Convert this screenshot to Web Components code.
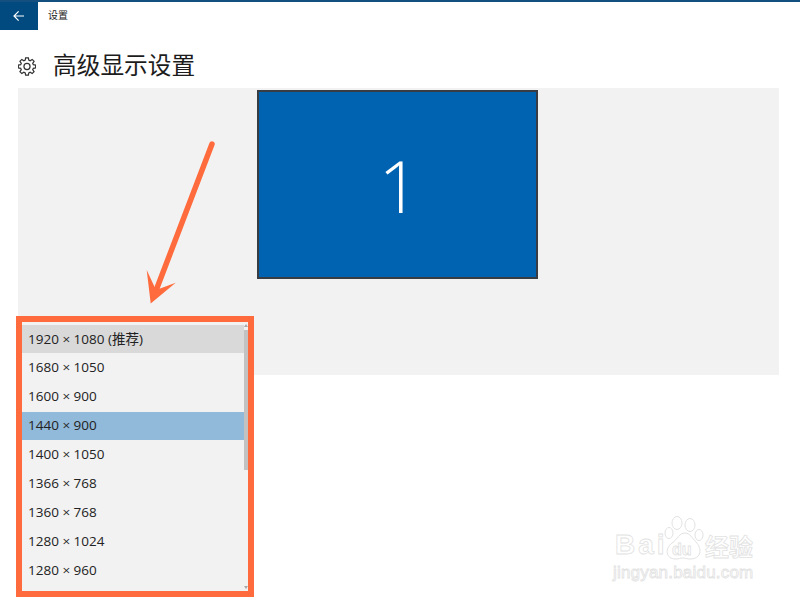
<!DOCTYPE html>
<html>
<head>
<meta charset="utf-8">
<style>
  html, body { margin: 0; height: 100%; background: #ffffff; overflow: hidden; }
  body { font-family: "Noto Sans", "Noto Sans CJK SC", sans-serif; color: #1a1a1a; }
  settings-page { width: 800px; height: 600px; }
</style>
</head>
<body>
<settings-page>
  <title-bar>设置</title-bar>
  <page-heading>高级显示设置</page-heading>
  <display-panel>1</display-panel>
  <callout-arrow></callout-arrow>
  <mode-list>
    <mode-item state="hover">1920 × 1080 (推荐)</mode-item>
    <mode-item>1680 × 1050</mode-item>
    <mode-item>1600 × 900</mode-item>
    <mode-item state="selected">1440 × 900</mode-item>
    <mode-item>1400 × 1050</mode-item>
    <mode-item>1366 × 768</mode-item>
    <mode-item>1360 × 768</mode-item>
    <mode-item>1280 × 1024</mode-item>
    <mode-item>1280 × 960</mode-item>
  </mode-list>
  <baidu-mark></baidu-mark>
</settings-page>

<script>
class SettingsPage extends HTMLElement {
  constructor() {
    super()
    this.attachShadow({ mode: 'open' }).innerHTML = `
      <style>
        :host { display: flex; flex-direction: column; position: relative; overflow: hidden; }
      </style>
      <slot></slot>`
  }
}

class TitleBar extends HTMLElement {
  constructor() {
    super()
    this.attachShadow({ mode: 'open' }).innerHTML = `
      <style>
        :host { display: flex; align-items: flex-start; height: 28px; border-top: 2px solid #14507f; font-size: 10px; color: #222; }
        .back { width: 38px; height: 28px; background: #004a80; display: flex; align-items: center; justify-content: center; margin-right: 10px; }
        .label { font-family: "Noto Sans CJK SC", sans-serif; line-height: 28px; margin-top: -1px; }
      </style>
      <div class="back">
        <svg width="12" height="12" viewBox="0 0 12 12" fill="none" stroke="#ffffff" stroke-width="1.2">
          <path d="M11 6H1.2M5.6 1.4L1 6l4.6 4.6"/>
        </svg>
      </div>
      <span class="label"><slot></slot></span>`
  }
}

class PageHeading extends HTMLElement {
  constructor() {
    super()
    this.attachShadow({ mode: 'open' }).innerHTML = `
      <style>
        :host { display: flex; align-items: center; height: 58px; padding: 10px 0 0 18px; box-sizing: border-box; font-family: "Noto Sans CJK SC", sans-serif; font-size: 23.7px; color: #1c1c1c; }
        svg { margin: 5px 17px 0 0; flex: none; }
      </style>
      <svg width="18" height="19" viewBox="0 0 17 18" fill="none" stroke="#333" stroke-width="1.15">
        <circle cx="8.5" cy="9" r="2.9"/>
        <path d="M7.2.8h2.6l.4 2.2 1.3.6 1.9-1.3 1.8 1.8-1.3 1.9.6 1.3 2.2.4v2.6l-2.2.4-.6 1.3 1.3 1.9-1.8 1.8-1.9-1.3-1.3.6-.4 2.2H7.2l-.4-2.2-1.3-.6-1.9 1.3-1.8-1.8 1.3-1.9-.6-1.3-2.2-.4V7.7l2.2-.4.6-1.3-1.3-1.9 1.8-1.8 1.9 1.3 1.3-.6z"/>
      </svg>
      <slot></slot>`
  }
}

class DisplayPanel extends HTMLElement {
  constructor() {
    super()
    this.attachShadow({ mode: 'open' }).innerHTML = `
      <style>
        :host { display: flex; justify-content: center; align-items: flex-start; margin: 0 21px 0 18px; height: 287px; padding-top: 2px; box-sizing: border-box; background: #f2f2f2; }
        .monitor { width: 281px; height: 189px; margin-right: 2px; padding-left: 3px; box-sizing: border-box; border: 2px solid #383d44; background: #0063b1; color: #fff; display: flex; align-items: center; justify-content: center; font-family: "Open Sans", sans-serif; font-weight: 300; font-size: 72px; line-height: 1; }
      </style>
      <div class="monitor"><slot></slot></div>`
  }
}

class ModeList extends HTMLElement {
  constructor() {
    super()
    this.attachShadow({ mode: 'open' }).innerHTML = `
      <style>
        :host { display: flex; position: absolute; left: 16px; top: 316px; width: 238px; height: 281px; box-sizing: border-box; border: 6px solid #ff6b3d; background: #f2f2f2; }
        .items { flex: 1; display: flex; flex-direction: column; padding-top: 3px; min-width: 0; }
        .bar { width: 4px; flex: none; position: relative; background: #f2f2f2; }
        .thumb { position: absolute; left: 0; right: 0; top: 8px; height: 140px; background: #c2c2c2; }
        .up, .down { position: absolute; left: 0; width: 0; height: 0; border-left: 2px solid transparent; border-right: 2px solid transparent; }
        .up { top: 2px; border-bottom: 3px solid #a8a8a8; }
        .down { bottom: 2px; border-top: 3px solid #a8a8a8; }
      </style>
      <div class="items"><slot></slot></div>
      <div class="bar"><span class="up"></span><div class="thumb"></div><span class="down"></span></div>`
  }
}

class ModeItem extends HTMLElement {
  constructor() {
    super()
    this.attachShadow({ mode: 'open' }).innerHTML = `
      <style>
        :host { display: flex; align-items: center; height: 29px; padding: 0 0 3px 6px; box-sizing: border-box; font-family: "Open Sans", "Noto Sans CJK SC", sans-serif; font-size: 13.5px; color: #222; border-bottom: 1px solid transparent; }
        :host([state="hover"]) { background: #d9d9d9; border-bottom-color: #f2f2f2; }
        :host([state="selected"]) { background: #91b9d9; border-bottom-color: #f2f2f2; }
      </style>
      <slot></slot>`
  }
}

class CalloutArrow extends HTMLElement {
  constructor() {
    super()
    this.attachShadow({ mode: 'open' }).innerHTML = `
      <style>
        :host { display: block; position: absolute; left: 140px; top: 135px; width: 80px; height: 175px; }
      </style>
      <svg width="80" height="175" viewBox="140 135 80 175">
        <path d="M212 144L157 288" stroke="#ff6b3d" stroke-width="5.5" stroke-linecap="round" fill="none"/>
        <path d="M146.7 270L150.7 303.5 175.7 282.7 156 290z" fill="#ff6b3d"/>
      </svg>`
  }
}

class BaiduMark extends HTMLElement {
  constructor() {
    super()
    this.attachShadow({ mode: 'open' }).innerHTML = `
      <style>
        :host { display: block; position: absolute; left: 612px; top: 512px; width: 150px; height: 72px; font-family: "Liberation Sans", sans-serif; color: #fff; -webkit-text-stroke: .8px #e2e2e2; }
        span { position: absolute; white-space: nowrap; }
        .bai { left: 3px; top: 17px; font-size: 28px; font-weight: 700; letter-spacing: 3px; }
        .du { left: 60px; top: 29px; font-size: 16px; font-weight: 700; }
        .jy { left: 93px; top: 22px; font-family: "Noto Sans CJK SC", sans-serif; font-size: 24px; line-height: 1; font-weight: 700; }
        .url { left: 1px; top: 51px; font-size: 17px; letter-spacing: .2px; }
        svg { position: absolute; left: 52px; top: 4px; }
      </style>
      <svg width="42" height="46" viewBox="0 0 42 46" fill="none" stroke="#e2e2e2" stroke-width="1">
        <ellipse cx="13" cy="7" rx="5" ry="6.5"/>
        <ellipse cx="26" cy="9" rx="5" ry="6.5"/>
        <ellipse cx="35" cy="19" rx="4" ry="5.5"/>
        <ellipse cx="5" cy="17" rx="4" ry="5.5"/>
        <path d="M21 17c5 0 7 5 11 9 6 6 6 17-6 17-3 0-4-1-7-1s-4 1-7 1C1 43 1 32 8 27c6-4 7-10 13-10z"/>
      </svg>
      <span class="bai">Bai</span><span class="du">du</span><span class="jy">经验</span>
      <span class="url">jingyan.baidu.com</span>`
  }
}

customElements.define('settings-page', SettingsPage)
customElements.define('title-bar', TitleBar)
customElements.define('page-heading', PageHeading)
customElements.define('display-panel', DisplayPanel)
customElements.define('mode-list', ModeList)
customElements.define('mode-item', ModeItem)
customElements.define('callout-arrow', CalloutArrow)
customElements.define('baidu-mark', BaiduMark)
</script>
</body>
</html>
